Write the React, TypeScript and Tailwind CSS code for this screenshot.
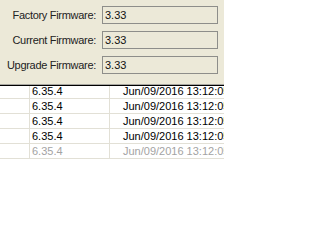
const rows = [
  { ver: "6.35.4", date: "Jun/09/2016 13:12:05", dim: false },
  { ver: "6.35.4", date: "Jun/09/2016 13:12:05", dim: false },
  { ver: "6.35.4", date: "Jun/09/2016 13:12:05", dim: false },
  { ver: "6.35.4", date: "Jun/09/2016 13:12:05", dim: false },
  { ver: "6.35.4", date: "Jun/09/2016 13:12:05", dim: true },
];

const fields = [
  { label: "Factory Firmware:", value: "3.33" },
  { label: "Current Firmware:", value: "3.33" },
  { label: "Upgrade Firmware:", value: "3.33" },
];

export default function App() {
  return (
    <div
      className="w-[224px] h-[204px] overflow-hidden bg-white text-[11px]"
      style={{ fontFamily: '"Liberation Sans", Arial, sans-serif' }}
    >
      {/* firmware panel */}
      <div className="h-[86px] bg-[#ece9d8] border-b border-black shadow-[inset_0_-1px_0_#a7a6a0] pt-[6px] flex flex-col gap-[7px]">
        {fields.map((f) => (
          <div key={f.label} className="flex items-center">
            <span className="w-[97px] text-right text-[#222] pr-[1px] tracking-[-0.3px]">
              {f.label}
            </span>
            <div className="ml-[5px] w-[116px] h-[18px] border border-[#8e8e8a] bg-[#ece9d8] flex items-center pl-[2px] text-[#111]">
              {f.value}
            </div>
          </div>
        ))}
      </div>

      {/* version list */}
      <div className="h-[118px] overflow-hidden">
        <div className="mt-[-2px]">
          {rows.map((r, i) => (
            <div
              key={i}
              className={`h-[15px] flex border-b border-[#e2e0d6] whitespace-nowrap ${
                r.dim ? "text-[#a3a3a3]" : "text-black"
              }`}
            >
              <div className="w-[30px] shrink-0 border-r border-[#e2e0d6]" />
              <div className="w-[80px] shrink-0 border-r border-[#e2e0d6] pl-[2px] leading-[15px]">
                {r.ver}
              </div>
              <div className="pl-[13px] leading-[15px]">{r.date}</div>
            </div>
          ))}
        </div>
      </div>
    </div>
  );
}
